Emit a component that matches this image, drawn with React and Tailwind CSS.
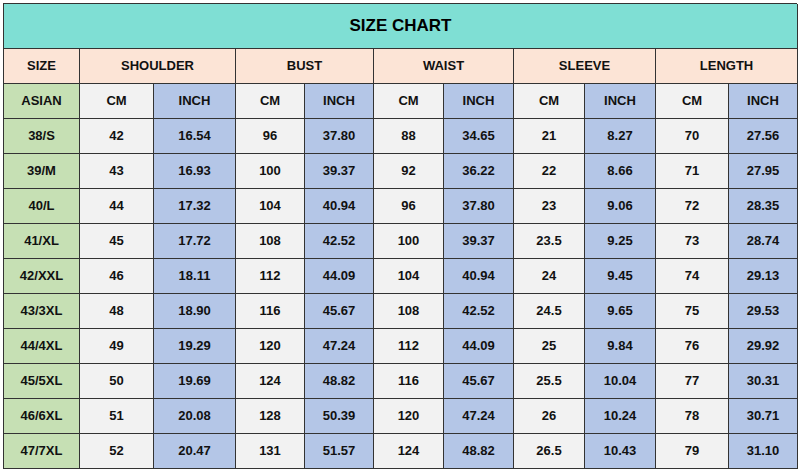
import React from 'react';

const widths = 'grid-cols-[76px_74px_82px_69px_69px_70px_70px_71px_71px_73px_69px]';

const rows = [
  ['38/S', '42', '16.54', '96', '37.80', '88', '34.65', '21', '8.27', '70', '27.56'],
  ['39/M', '43', '16.93', '100', '39.37', '92', '36.22', '22', '8.66', '71', '27.95'],
  ['40/L', '44', '17.32', '104', '40.94', '96', '37.80', '23', '9.06', '72', '28.35'],
  ['41/XL', '45', '17.72', '108', '42.52', '100', '39.37', '23.5', '9.25', '73', '28.74'],
  ['42/XXL', '46', '18.11', '112', '44.09', '104', '40.94', '24', '9.45', '74', '29.13'],
  ['43/3XL', '48', '18.90', '116', '45.67', '108', '42.52', '24.5', '9.65', '75', '29.53'],
  ['44/4XL', '49', '19.29', '120', '47.24', '112', '44.09', '25', '9.84', '76', '29.92'],
  ['45/5XL', '50', '19.69', '124', '48.82', '116', '45.67', '25.5', '10.04', '77', '30.31'],
  ['46/6XL', '51', '20.08', '128', '50.39', '120', '47.24', '26', '10.24', '78', '30.71'],
  ['47/7XL', '52', '20.47', '131', '51.57', '124', '48.82', '26.5', '10.43', '79', '31.10'],
];

const groups = ['SHOULDER', 'BUST', 'WAIST', 'SLEEVE', 'LENGTH'];

const cell = 'flex items-center justify-center h-[35px] border-r border-b border-[#333]';

const colBg = (i) => {
  if (i === 0) return 'bg-[#c6e0b4]';
  return i % 2 === 1 ? 'bg-[#f2f2f2]' : 'bg-[#b4c6e7]';
};

export default function App() {
  return (
    <div className="w-[800px] h-[471px] bg-white pt-[3px] pl-[3px] font-['Liberation_Sans',Arial,sans-serif] font-bold text-[13px] text-[#111]">
      <div className={`grid ${widths} w-[794px] border-l border-t border-[#333]`}>
        {/* Title */}
        <div className="col-span-11 flex items-center justify-center h-[45px] bg-[#7fdfd4] border-r border-b border-[#333] text-[17px] text-black">
          SIZE CHART
        </div>

        {/* Group header */}
        <div className={`${cell} bg-[#fce4d6]`}>SIZE</div>
        {groups.map((g) => (
          <div key={g} className={`${cell} col-span-2 bg-[#fce4d6]`}>{g}</div>
        ))}

        {/* Unit row */}
        <div className={`${cell} bg-[#c6e0b4]`}>ASIAN</div>
        {groups.map((g) => (
          <React.Fragment key={g}>
            <div className={`${cell} bg-[#f2f2f2]`}>CM</div>
            <div className={`${cell} bg-[#b4c6e7]`}>INCH</div>
          </React.Fragment>
        ))}

        {/* Data */}
        {rows.map((r) =>
          r.map((v, i) => (
            <div key={r[0] + i} className={`${cell} ${colBg(i)}`}>{v}</div>
          ))
        )}
      </div>
    </div>
  );
}
